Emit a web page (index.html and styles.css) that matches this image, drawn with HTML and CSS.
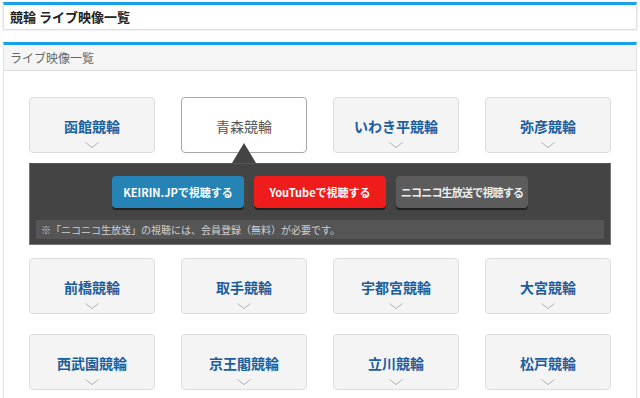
FILE: index.html
```html
<!DOCTYPE html>
<html lang="ja">
<head>
    <meta charset="UTF-8">
    <meta name="viewport" content="width=device-width, initial-scale=1.0">
    <title>競輪 ライブ映像一覧</title>
    <link rel="stylesheet" href="styles.css">
</head>
<body>

    <div class="page-title">競輪 ライブ映像一覧</div>

    <div class="section">
        <div class="section-head">ライブ映像一覧</div>

        <div class="venues">
            <div class="venue">函館競輪<svg class="chev" width="14" height="6" viewBox="0 0 14 6"><polyline points="0.5,0.5 7,5.5 13.5,0.5"/></svg></div>
            <div class="venue active">青森競輪<svg class="chev" width="14" height="6" viewBox="0 0 14 6"><polyline points="0.5,0.5 7,5.5 13.5,0.5"/></svg></div>
            <div class="venue">いわき平競輪<svg class="chev" width="14" height="6" viewBox="0 0 14 6"><polyline points="0.5,0.5 7,5.5 13.5,0.5"/></svg></div>
            <div class="venue">弥彦競輪<svg class="chev" width="14" height="6" viewBox="0 0 14 6"><polyline points="0.5,0.5 7,5.5 13.5,0.5"/></svg></div>

            <div class="watch">
                <div class="watch-buttons">
                    <a class="btn btn-keirin">KEIRIN.JPで視聴する</a>
                    <a class="btn btn-youtube">YouTubeで視聴する</a>
                    <a class="btn btn-nico">ニコニコ生放送で視聴する</a>
                </div>
                <div class="watch-note">※「ニコニコ生放送」の視聴には、会員登録（無料）が必要です。</div>
            </div>

            <div class="venue">前橋競輪<svg class="chev" width="14" height="6" viewBox="0 0 14 6"><polyline points="0.5,0.5 7,5.5 13.5,0.5"/></svg></div>
            <div class="venue">取手競輪<svg class="chev" width="14" height="6" viewBox="0 0 14 6"><polyline points="0.5,0.5 7,5.5 13.5,0.5"/></svg></div>
            <div class="venue">宇都宮競輪<svg class="chev" width="14" height="6" viewBox="0 0 14 6"><polyline points="0.5,0.5 7,5.5 13.5,0.5"/></svg></div>
            <div class="venue">大宮競輪<svg class="chev" width="14" height="6" viewBox="0 0 14 6"><polyline points="0.5,0.5 7,5.5 13.5,0.5"/></svg></div>

            <div class="venue">西武園競輪<svg class="chev" width="14" height="6" viewBox="0 0 14 6"><polyline points="0.5,0.5 7,5.5 13.5,0.5"/></svg></div>
            <div class="venue">京王閣競輪<svg class="chev" width="14" height="6" viewBox="0 0 14 6"><polyline points="0.5,0.5 7,5.5 13.5,0.5"/></svg></div>
            <div class="venue">立川競輪<svg class="chev" width="14" height="6" viewBox="0 0 14 6"><polyline points="0.5,0.5 7,5.5 13.5,0.5"/></svg></div>
            <div class="venue">松戸競輪<svg class="chev" width="14" height="6" viewBox="0 0 14 6"><polyline points="0.5,0.5 7,5.5 13.5,0.5"/></svg></div>
        </div>
    </div>

</body>
</html>
```

FILE: styles.css
```css
body {
    margin: 0;
    padding: 2px 3px 0 3px;
    height: 396px;
    font-family: "Noto Sans CJK JP", "Liberation Sans", sans-serif;
    background: #fff;
    overflow: hidden;
}
.page-title {
    border-top: 3px solid #17a2e6;
    border-left: 1px solid #e2e2e2;
    border-right: 1px solid #e2e2e2;
    box-shadow: 0 1px 2px rgba(0, 0, 0, 0.18);
    height: 24px;
    line-height: 24px;
    padding-left: 6px;
    font-size: 13px;
    font-weight: bold;
    color: #222;
}
.section {
    margin-top: 13px;
    border-top: 3px solid #17a2e6;
    border-left: 1px solid #e2e2e2;
    border-right: 1px solid #e2e2e2;
    height: 353px;
    overflow: hidden;
}
.section-head {
    background: #f5f5f5;
    border-bottom: 1px solid #ddd;
    height: 25px;
    line-height: 25px;
    padding-left: 6px;
    font-size: 12px;
    color: #666;
}
.venues {
    display: grid;
    grid-template-columns: repeat(4, 126px);
    column-gap: 26px;
    row-gap: 20px;
    width: 582px;
    margin: 26px 0 0 25px;
}
.venue {
    display: flex;
    flex-direction: column;
    align-items: center;
    height: 56px;
    box-sizing: border-box;
    padding-top: 19px;
    background: #f4f4f4;
    border: 1px solid #dcdcdc;
    border-radius: 4px;
    font-size: 14px;
    line-height: 18px;
    font-weight: bold;
    color: #1b5e9e;
}
.chev {
    margin-top: 7px;
    fill: none;
    stroke: #b0b0b0;
    stroke-width: 1;
}
.venue.active {
    background: #fff;
    border-color: #a8a8a8;
    font-weight: normal;
    color: #555;
}
.venue.active .chev {
    visibility: hidden;
}
.watch {
    grid-column: 1 / -1;
    position: relative;
    margin: -10px 0 -7px 0;
    background: #444;
    border: 1px solid #777;
    border-top-color: #555;
    height: 82px;
    box-sizing: border-box;
    padding-top: 12px;
}
.watch::before {
    content: "";
    position: absolute;
    left: 202px;
    top: -21px;
    border-left: 12px solid transparent;
    border-right: 12px solid transparent;
    border-bottom: 20px solid #444;
}
.watch-buttons {
    display: flex;
    justify-content: center;
    gap: 10px;
}
.btn {
    width: 132px;
    height: 32px;
    line-height: 32px;
    text-align: center;
    border-radius: 4px;
    box-shadow: 0 2px 0 #222;
    font-size: 11px;
    font-weight: bold;
    color: #fff;
}
.btn-keirin {
    background: #2683b5;
}
.btn-youtube {
    background: #f01c1c;
}
.btn-nico {
    background: #5c5c5c;
    color: #eee;
    letter-spacing: -0.8px;
}
.watch-note {
    margin: 12px 6px 0 6px;
    height: 19px;
    line-height: 19px;
    padding-left: 5px;
    background: #555;
    font-size: 10px;
    color: #d0d0d0;
}
```
